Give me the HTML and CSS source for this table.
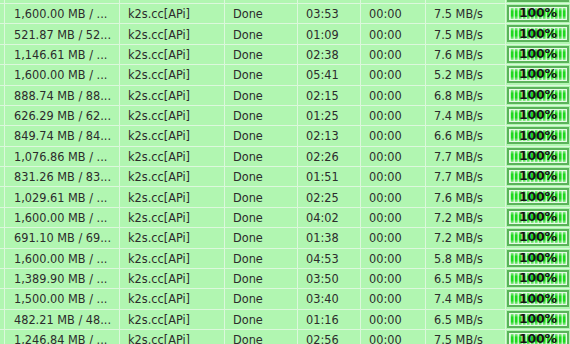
FILE: index.html
```html
<!DOCTYPE html>
<html>
<head>
<meta charset="utf-8">
<link rel="stylesheet" href="styles.css">
</head>
<body>
<div class="list">
  <div class="row partial"><div class="c c0"></div><div class="c c1"></div><div class="c c2"></div><div class="c c3"></div><div class="c c4"></div><div class="c c5"></div><div class="c c6"></div><div class="c c7"><div class="bar"></div></div></div>
  <div class="row"><div class="c c0"></div><div class="c c1">1,600.00 MB / ...</div><div class="c c2">k2s.cc[APi]</div><div class="c c3">Done</div><div class="c c4">03:53</div><div class="c c5">00:00</div><div class="c c6">7.5 MB/s</div><div class="c c7"><div class="bar"><span>100%</span></div></div></div>
  <div class="row"><div class="c c0"></div><div class="c c1">521.87 MB / 52...</div><div class="c c2">k2s.cc[APi]</div><div class="c c3">Done</div><div class="c c4">01:09</div><div class="c c5">00:00</div><div class="c c6">7.5 MB/s</div><div class="c c7"><div class="bar"><span>100%</span></div></div></div>
  <div class="row"><div class="c c0"></div><div class="c c1">1,146.61 MB / ...</div><div class="c c2">k2s.cc[APi]</div><div class="c c3">Done</div><div class="c c4">02:38</div><div class="c c5">00:00</div><div class="c c6">7.6 MB/s</div><div class="c c7"><div class="bar"><span>100%</span></div></div></div>
  <div class="row"><div class="c c0"></div><div class="c c1">1,600.00 MB / ...</div><div class="c c2">k2s.cc[APi]</div><div class="c c3">Done</div><div class="c c4">05:41</div><div class="c c5">00:00</div><div class="c c6">5.2 MB/s</div><div class="c c7"><div class="bar"><span>100%</span></div></div></div>
  <div class="row"><div class="c c0"></div><div class="c c1">888.74 MB / 88...</div><div class="c c2">k2s.cc[APi]</div><div class="c c3">Done</div><div class="c c4">02:15</div><div class="c c5">00:00</div><div class="c c6">6.8 MB/s</div><div class="c c7"><div class="bar"><span>100%</span></div></div></div>
  <div class="row"><div class="c c0"></div><div class="c c1">626.29 MB / 62...</div><div class="c c2">k2s.cc[APi]</div><div class="c c3">Done</div><div class="c c4">01:25</div><div class="c c5">00:00</div><div class="c c6">7.4 MB/s</div><div class="c c7"><div class="bar"><span>100%</span></div></div></div>
  <div class="row"><div class="c c0"></div><div class="c c1">849.74 MB / 84...</div><div class="c c2">k2s.cc[APi]</div><div class="c c3">Done</div><div class="c c4">02:13</div><div class="c c5">00:00</div><div class="c c6">6.6 MB/s</div><div class="c c7"><div class="bar"><span>100%</span></div></div></div>
  <div class="row"><div class="c c0"></div><div class="c c1">1,076.86 MB / ...</div><div class="c c2">k2s.cc[APi]</div><div class="c c3">Done</div><div class="c c4">02:26</div><div class="c c5">00:00</div><div class="c c6">7.7 MB/s</div><div class="c c7"><div class="bar"><span>100%</span></div></div></div>
  <div class="row"><div class="c c0"></div><div class="c c1">831.26 MB / 83...</div><div class="c c2">k2s.cc[APi]</div><div class="c c3">Done</div><div class="c c4">01:51</div><div class="c c5">00:00</div><div class="c c6">7.7 MB/s</div><div class="c c7"><div class="bar"><span>100%</span></div></div></div>
  <div class="row"><div class="c c0"></div><div class="c c1">1,029.61 MB / ...</div><div class="c c2">k2s.cc[APi]</div><div class="c c3">Done</div><div class="c c4">02:25</div><div class="c c5">00:00</div><div class="c c6">7.6 MB/s</div><div class="c c7"><div class="bar"><span>100%</span></div></div></div>
  <div class="row"><div class="c c0"></div><div class="c c1">1,600.00 MB / ...</div><div class="c c2">k2s.cc[APi]</div><div class="c c3">Done</div><div class="c c4">04:02</div><div class="c c5">00:00</div><div class="c c6">7.2 MB/s</div><div class="c c7"><div class="bar"><span>100%</span></div></div></div>
  <div class="row"><div class="c c0"></div><div class="c c1">691.10 MB / 69...</div><div class="c c2">k2s.cc[APi]</div><div class="c c3">Done</div><div class="c c4">01:38</div><div class="c c5">00:00</div><div class="c c6">7.2 MB/s</div><div class="c c7"><div class="bar"><span>100%</span></div></div></div>
  <div class="row"><div class="c c0"></div><div class="c c1">1,600.00 MB / ...</div><div class="c c2">k2s.cc[APi]</div><div class="c c3">Done</div><div class="c c4">04:53</div><div class="c c5">00:00</div><div class="c c6">5.8 MB/s</div><div class="c c7"><div class="bar"><span>100%</span></div></div></div>
  <div class="row"><div class="c c0"></div><div class="c c1">1,389.90 MB / ...</div><div class="c c2">k2s.cc[APi]</div><div class="c c3">Done</div><div class="c c4">03:50</div><div class="c c5">00:00</div><div class="c c6">6.5 MB/s</div><div class="c c7"><div class="bar"><span>100%</span></div></div></div>
  <div class="row"><div class="c c0"></div><div class="c c1">1,500.00 MB / ...</div><div class="c c2">k2s.cc[APi]</div><div class="c c3">Done</div><div class="c c4">03:40</div><div class="c c5">00:00</div><div class="c c6">7.4 MB/s</div><div class="c c7"><div class="bar"><span>100%</span></div></div></div>
  <div class="row"><div class="c c0"></div><div class="c c1">482.21 MB / 48...</div><div class="c c2">k2s.cc[APi]</div><div class="c c3">Done</div><div class="c c4">01:16</div><div class="c c5">00:00</div><div class="c c6">6.5 MB/s</div><div class="c c7"><div class="bar"><span>100%</span></div></div></div>
  <div class="row"><div class="c c0"></div><div class="c c1">1,246.84 MB / ...</div><div class="c c2">k2s.cc[APi]</div><div class="c c3">Done</div><div class="c c4">02:56</div><div class="c c5">00:00</div><div class="c c6">7.5 MB/s</div><div class="c c7"><div class="bar"><span>100%</span></div></div></div>
</div>
</body>
</html>
```

FILE: styles.css
```css
html, body {
  margin: 0;
  padding: 0;
  width: 570px;
  height: 344px;
  overflow: hidden;
  background: #b1f6b1;
}

.list {
  margin-top: -16.375px;
  font-family: "DejaVu Sans Condensed", "DejaVu Sans", sans-serif;
  font-size: 12.6px;
  color: #2c2c2c;
}

.row {
  display: flex;
  height: 20.375px;
  box-sizing: border-box;
  border-bottom: 1px solid #dcf8dc;
  background: #b1f6b1;
}

.c {
  flex: none;
  box-sizing: border-box;
  border-right: 1px solid #dcf8dc;
  padding-left: 8px;
  display: flex;
  align-items: center;
  white-space: nowrap;
  overflow: hidden;
}

.c0 { width: 5px; padding: 0; }
.c1 { width: 115px; padding-left: 9px; }
.c2 { width: 105px; }
.c3 { width: 73px; }
.c4 { width: 63px; }
.c5 { width: 65px; }
.c6 { width: 80px; }
.c7 { width: 80px; padding-left: 1px; border-right: none; align-items: flex-start; }

.bar {
  margin-top: 1px;
  width: 62px;
  height: 17px;
  box-sizing: border-box;
  border: 2px solid #5ab35a;
  padding: 1px;
  background: #e6fbe6;
  position: relative;
  display: flex;
  align-items: center;
  justify-content: center;
}

.bar::before {
  content: "";
  position: absolute;
  left: 1px;
  right: 1px;
  top: 1px;
  bottom: 1px;
  background:
    linear-gradient(180deg, rgba(255,255,255,0.5) 0%, rgba(255,255,255,0) 30%, rgba(255,255,255,0) 70%, rgba(255,255,255,0.5) 100%),
    repeating-linear-gradient(90deg, #b9f3b9 0 1px, #1ed81e 1px 3px, #6ee66e 3px 4px);
}

.bar span {
  position: relative;
  font-family: "DejaVu Sans", sans-serif;
  font-weight: bold;
  font-size: 12.5px;
  letter-spacing: -0.2px;
  color: #141414;
  line-height: 1;
}
```
